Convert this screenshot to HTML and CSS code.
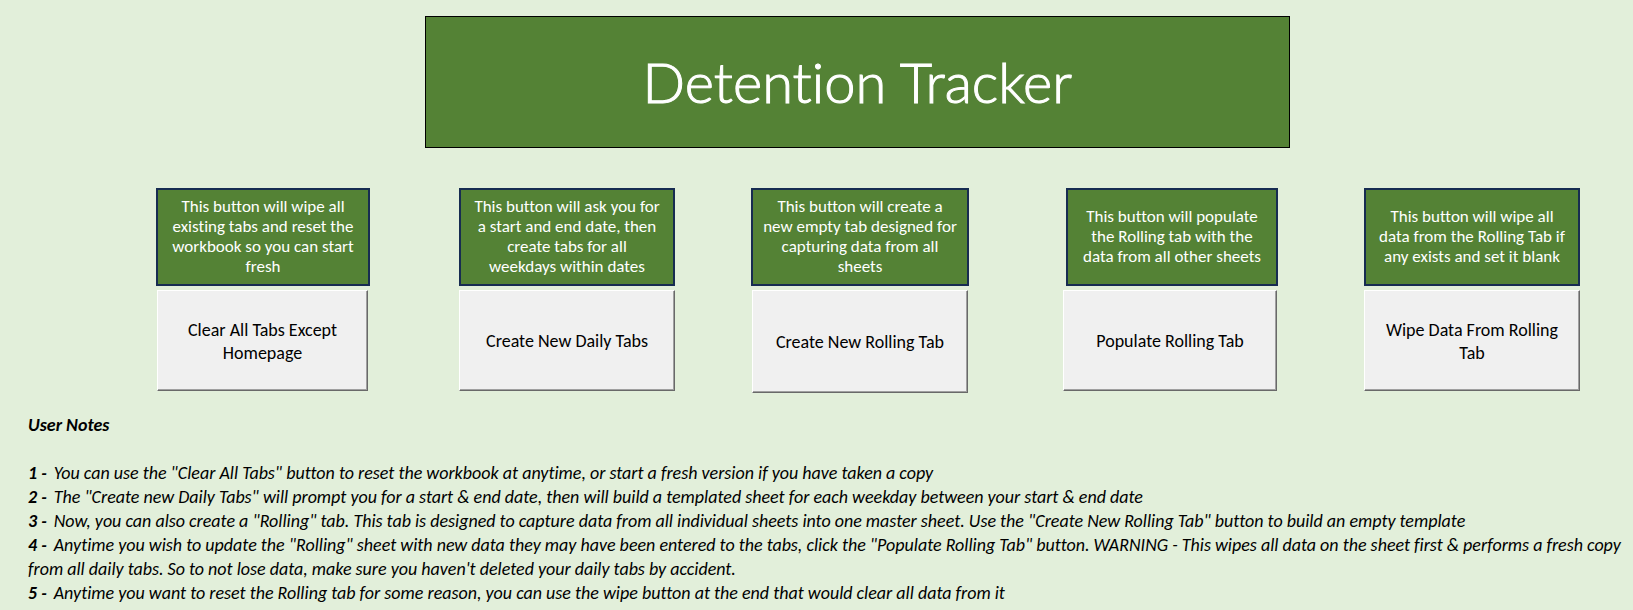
FILE: index.html
```html
<!DOCTYPE html>
<html lang="en">
<head>
<meta charset="utf-8">
<title>Detention Tracker</title>
<link rel="stylesheet" href="styles.css">
</head>
<body>
<header class="banner">
  <h1 class="banner-title">Detention Tracker</h1>
</header>
<main>
  <section class="actions">
    <div class="action action-clear">
      <p class="action-label" id="clear-help">This button will wipe all existing tabs and reset the workbook so you can start fresh</p>
      <button class="action-button" type="button" aria-describedby="clear-help">Clear All Tabs Except Homepage</button>
    </div>
    <div class="action action-daily">
      <p class="action-label" id="daily-help">This button will ask you for a start and end date, then create tabs for all weekdays within dates</p>
      <button class="action-button" type="button" aria-describedby="daily-help">Create New Daily Tabs</button>
    </div>
    <div class="action action-rolling">
      <p class="action-label" id="rolling-help">This button will create a new empty tab designed for capturing data from all sheets</p>
      <button class="action-button" type="button" aria-describedby="rolling-help">Create New Rolling Tab</button>
    </div>
    <div class="action action-populate">
      <p class="action-label" id="populate-help">This button will populate the Rolling tab with the data from all other sheets</p>
      <button class="action-button" type="button" aria-describedby="populate-help">Populate Rolling Tab</button>
    </div>
    <div class="action action-wipe">
      <p class="action-label" id="wipe-help">This button will wipe all data from the Rolling Tab if any exists and set it blank</p>
      <button class="action-button" type="button" aria-describedby="wipe-help">Wipe Data From Rolling Tab</button>
    </div>
  </section>
  <section class="notes">
    <h2 class="notes-title">User Notes</h2>
    <p class="note"><b class="note-number">1 -</b>You can use the "Clear All Tabs" button to reset the workbook at anytime, or start a fresh version if you have taken a copy</p>
    <p class="note"><b class="note-number">2 -</b>The "Create new Daily Tabs" will prompt you for a start &amp; end date, then will build a templated sheet for each weekday between your start &amp; end date</p>
    <p class="note"><b class="note-number">3 -</b>Now, you can also create a "Rolling" tab. This tab is designed to capture data from all individual sheets into one master sheet. Use the "Create New Rolling Tab" button to build an empty template</p>
    <p class="note"><b class="note-number">4 -</b>Anytime you wish to update the "Rolling" sheet with new data they may have been entered to the tabs, click the "Populate Rolling Tab" button. WARNING - This wipes all data on the sheet first &amp; performs a fresh copy from all daily tabs. So to not lose data, make sure you haven't deleted your daily tabs by accident.</p>
    <p class="note"><b class="note-number">5 -</b>Anytime you want to reset the Rolling tab for some reason, you can use the wipe button at the end that would clear all data from it</p>
  </section>
</main>
</body>
</html>
```
FILE: styles.css
```css
* {
  box-sizing: border-box;
}

body {
  margin: 0;
  background: #e2efda;
  color: #000;
  font-family: Calibri, Carlito, Lato, sans-serif;
  font-size: 18px;
  font-variant-ligatures: none;
}

h1, h2, p {
  margin: 0;
}

.banner {
  min-height: 132px;
  margin: 16px 21% 40px 26%;
  display: flex;
  align-items: center;
  justify-content: center;
  background: #548235;
  border: 1px solid #000;
  color: #fff;
}

.banner-title {
  font-family: Lato, sans-serif;
  font-size: 56px;
  line-height: 64px;
  font-weight: 300;
  -webkit-text-stroke: 1px #fff;
}

.actions {
  display: grid;
  grid-template-columns: 156fr 214fr 89fr 216fr 76fr 218fr 94fr 215fr 86fr 216fr 53fr;
  align-items: start;
}

.action {
  display: flex;
  flex-direction: column;
  gap: 4px;
  min-width: 0;
}

.action-clear { grid-column: 2; }
.action-daily { grid-column: 4; }
.action-rolling { grid-column: 6; }
.action-populate { grid-column: 8; }
.action-wipe { grid-column: 10; }

.action-label {
  min-height: 98px;
  padding: 6px 10px;
  display: flex;
  align-items: center;
  justify-content: center;
  background: #548235;
  border: 2px solid #172c51;
  color: #fff;
  font-size: 17px;
  line-height: 20px;
  text-align: center;
}

.action-button {
  min-height: 101px;
  padding: 8px 16px 6px;
  background: #f0f0f0;
  border: 1px solid;
  border-color: #fff #696969 #696969 #fff;
  box-shadow: inset -1px -1px #a0a0a0;
  color: #000;
  font: inherit;
  line-height: 23px;
}

.action-clear .action-button { margin: 0 2px 0 1px; }
.action-daily .action-label { padding: 6px 12px; }
.action-rolling .action-button { min-height: 103px; margin: 0 1px; }
.action-populate .action-label { margin-left: 3px; }
.action-populate .action-button { margin-right: 1px; }

.notes {
  margin-top: 20px;
  padding: 0 4px 0 28px;
  font-style: italic;
  line-height: 24px;
}

.notes-title {
  margin-bottom: 24px;
  font-size: 18px;
  line-height: 24px;
}

.note-number {
  margin-right: 7px;
}
```
